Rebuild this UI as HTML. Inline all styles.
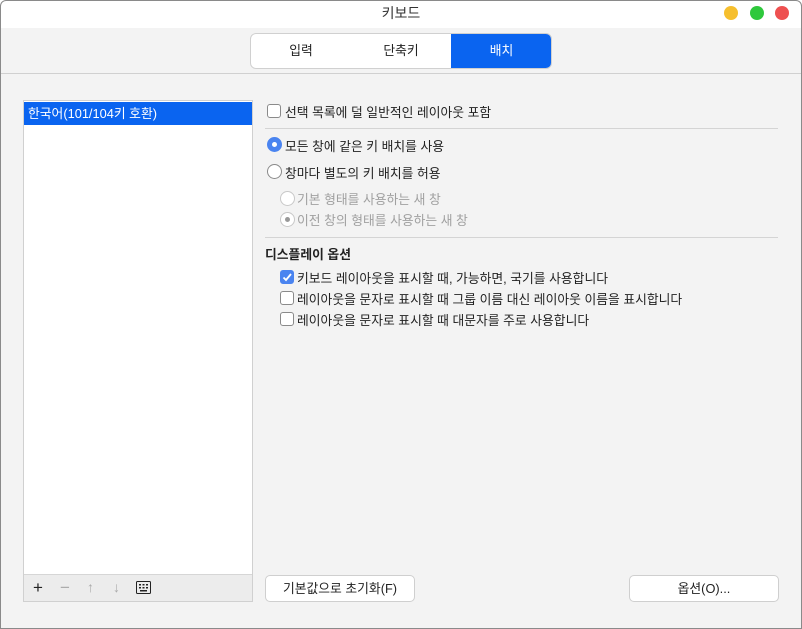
<!DOCTYPE html>
<html><head><meta charset="utf-8"><style>
*{box-sizing:border-box;margin:0;padding:0}
body{width:802px;height:629px;background:#fff;font-family:"Liberation Sans","Noto Sans CJK KR",sans-serif;font-size:12.8px;color:#222;position:relative;overflow:hidden}
.win{position:absolute;left:0;top:0;width:802px;height:629px;border-radius:6px 6px 0 0;background:#f3f3f3;overflow:hidden}
.frame{position:absolute;left:0;top:0;width:802px;height:629px;border:1px solid #8a8a8a;border-radius:6px 6px 0 0;pointer-events:none}
.title{position:absolute;left:0;top:0;width:802px;height:28px;background:#fff;text-align:center;line-height:27px;font-size:14px;color:#333}
.dot{position:absolute;top:6px;width:14px;height:14px;border-radius:50%}
.a{position:absolute;white-space:nowrap}
.tabs{position:absolute;left:250px;top:33px;width:302px;height:36px;border:1px solid #d0d0d0;border-radius:6px;background:#fff;overflow:hidden}
.tab{position:absolute;top:0;height:34px;line-height:33px;text-align:center;width:100px}
.cb{position:absolute;width:14px;height:14px;border:1px solid #8a8a8a;border-radius:3px;background:#fff}
.rb{position:absolute;width:15px;height:15px;border:1px solid #8a8a8a;border-radius:50%;background:#fff}
.hr{position:absolute;height:1px;background:#d4d4d4}
.btn{position:absolute;height:27px;border:1px solid #cfcfcf;border-radius:5px;background:#fff;text-align:center;line-height:25px}
.g{color:#a0a0a0}
</style></head><body><div class="win">
<div class="title">키보드</div>
<div class="dot" style="left:724px;background:#f6bf2e"></div>
<div class="dot" style="left:750px;background:#2ec83c"></div>
<div class="dot" style="left:775px;background:#ee5050"></div>
<div class="tabs">
<div class="tab" style="left:0">입력</div>
<div class="tab" style="left:100px">단축키</div>
<div class="tab" style="left:200px;width:101px;background:#0a64f0;color:#fff">배치</div>
</div>
<div class="hr" style="left:0;top:73px;width:802px;background:#d0d0d0"></div>
<div style="position:absolute;left:23px;top:100px;width:230px;height:502px;border:1px solid #d0d0d0;background:#fff">
<div style="position:absolute;left:0;top:1px;width:228px;height:23px;background:#0a64f0;color:#fff;line-height:23px;padding-left:4px">한국어(101/104키 호환)</div>
<div style="position:absolute;left:0;bottom:0;width:228px;height:27px;background:#ececec;border-top:1px solid #d6d6d6;font-size:17px;line-height:25px">
<span class="a" style="left:9px;color:#222">+</span><span class="a" style="left:36px;color:#aaa">−</span><span class="a" style="left:63px;color:#aaa;font-size:14px">↑</span><span class="a" style="left:89px;color:#aaa;font-size:14px">↓</span>
<svg class="a" style="left:112px;top:6px" width="15" height="13"><rect x="0.5" y="0.5" width="14" height="12" rx="1" fill="none" stroke="#222"/><g fill="#222"><rect x="3" y="3" width="2" height="1.5"/><rect x="6.5" y="3" width="2" height="1.5"/><rect x="10" y="3" width="2" height="1.5"/><rect x="3" y="6" width="2" height="1.5"/><rect x="6.5" y="6" width="2" height="1.5"/><rect x="10" y="6" width="2" height="1.5"/><rect x="4" y="9" width="7" height="1.5"/></g></svg>
</div></div>
<div class="cb" style="left:267px;top:104px"></div><span class="a" style="left:285px;top:102px">선택 목록에 덜 일반적인 레이아웃 포함</span>
<div class="hr" style="left:265px;top:128px;width:513px"></div>
<div class="rb" style="left:267px;top:137px;background:#4a84f0;border-color:#4a84f0"><div style="position:absolute;left:4px;top:4px;width:5px;height:5px;border-radius:50%;background:#fff"></div></div><span class="a" style="left:285px;top:136px">모든 창에 같은 키 배치를 사용</span>
<div class="rb" style="left:267px;top:164px"></div><span class="a" style="left:285px;top:163px">창마다 별도의 키 배치를 허용</span>
<div class="rb" style="left:280px;top:191px;border-color:#c8c8c8"></div><span class="a g" style="left:297px;top:189px">기본 형태를 사용하는 새 창</span>
<div class="rb" style="left:280px;top:212px;border-color:#c8c8c8"><div style="position:absolute;left:4px;top:4px;width:5px;height:5px;border-radius:50%;background:#999"></div></div><span class="a g" style="left:297px;top:210px">이전 창의 형태를 사용하는 새 창</span>
<div class="hr" style="left:265px;top:237px;width:513px"></div>
<span class="a" style="left:265px;top:244px;font-weight:bold">디스플레이 옵션</span>
<div class="cb" style="left:280px;top:270px;background:#4a84f0;border-color:#4a84f0"><svg width="12" height="12" style="position:absolute;left:0;top:0"><path d="M2.5 6.5l2.5 2.5 5-6" stroke="#fff" stroke-width="1.8" fill="none"/></svg></div><span class="a" style="left:297px;top:268px">키보드 레이아웃을 표시할 때, 가능하면, 국기를 사용합니다</span>
<div class="cb" style="left:280px;top:291px"></div><span class="a" style="left:297px;top:289px">레이아웃을 문자로 표시할 때 그룹 이름 대신 레이아웃 이름을 표시합니다</span>
<div class="cb" style="left:280px;top:312px"></div><span class="a" style="left:297px;top:310px">레이아웃을 문자로 표시할 때 대문자를 주로 사용합니다</span>
<div class="btn" style="left:265px;top:575px;width:150px">기본값으로 초기화(F)</div>
<div class="btn" style="left:629px;top:575px;width:150px">옵션(O)...</div>
</div><div class="frame"></div></body></html>
